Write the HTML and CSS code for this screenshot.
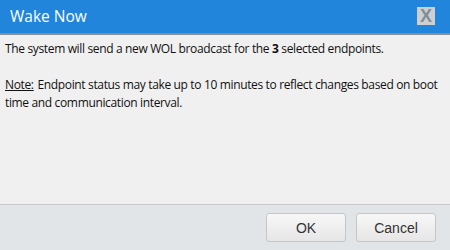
FILE: index.html
```html
<!DOCTYPE html>
<html>
<head>
<meta charset="utf-8">
<link rel="stylesheet" href="styles.css">
</head>
<body>
<div class="dialog">
  <div class="titlebar">
    <span class="title">Wake Now</span>
    <span class="close">X</span>
  </div>
  <div class="content">
    <p class="line">The system will send a new WOL broadcast for the <b>3</b> selected endpoints.</p>
    <p class="note"><u class="label">Note:</u> Endpoint status may take up to 10 minutes to reflect changes based on boot time and communication interval.</p>
  </div>
  <div class="footer">
    <button class="btn">OK</button>
    <button class="btn">Cancel</button>
  </div>
</div>
</body>
</html>
```
FILE: styles.css
```css
html, body {
  margin: 0;
  padding: 0;
}
body {
  width: 450px;
  height: 250px;
  overflow: hidden;
  background: #f0f0f0;
}
.dialog {
  display: flex;
  flex-direction: column;
  height: 250px;
  font-family: "Open Sans", "DejaVu Sans", sans-serif;
  color: #111;
}
.titlebar {
  background: #2185dc;
  border-bottom: 2px solid #8a8f94;
  box-sizing: border-box;
  height: 35px;
  display: flex;
  align-items: center;
  justify-content: space-between;
  padding: 0 15px 0 10px;
}
.title {
  color: #fff;
  font-size: 15.5px;
  margin-top: -2px;
}
.close {
  width: 18px;
  height: 18px;
  background: #cfcfcf;
  color: #7c8e9c;
  font-family: "Liberation Sans", Arial, sans-serif;
  font-weight: bold;
  font-size: 18px;
  line-height: 19px;
  text-align: center;
  margin-top: -2px;
}
.content {
  flex: 1;
  padding: 5px 5px 0 5px;
  font-size: 12px;
  line-height: 18px;
  letter-spacing: -0.35px;
}
.content p {
  margin: 0;
}
.label {
  display: inline-block;
  margin-right: 1px;
}
.line {
  margin-bottom: 18px !important;
}
.footer {
  height: 46px;
  box-sizing: border-box;
  border-top: 1px solid #c8c8c8;
  background: #e1e5e8;
  display: flex;
  justify-content: flex-end;
  align-items: center;
  gap: 10px;
  padding: 0 14px 0 0;
}
.btn {
  width: 80px;
  height: 29px;
  border: 1px solid #c6c6c6;
  border-radius: 3px;
  background: linear-gradient(#f7f7f7, #e6e6e6);
  font-family: "Liberation Sans", Arial, sans-serif;
  font-size: 14px;
  color: #333;
  padding: 0;
}
```
